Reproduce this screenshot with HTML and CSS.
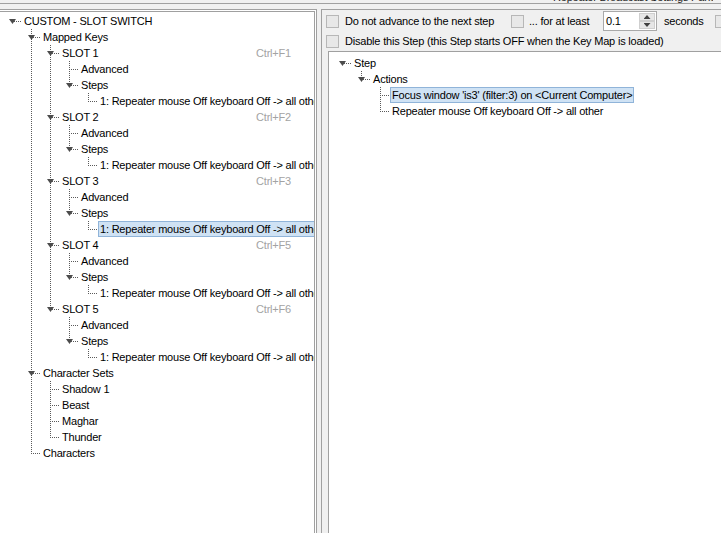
FILE: index.html
```html
<!DOCTYPE html>
<html>
<head>
<meta charset="utf-8">
<link rel="stylesheet" href="styles.css">
</head>
<body>
<div class="app">
  <div class="topstrip"><span class="cut">Repeater Broadcast Settings Panel</span></div>
  <div class="main">
    <div class="left">
      <div class="left-inner">
        <div class="tree ltree">
          <div class="row"><span class="c root"><b class="tri"></b></span><span class="lbl">CUSTOM - SLOT SWITCH</span></div>
          <div class="row"><span class="c"></span><span class="c tee"><b class="tri"></b></span><span class="lbl">Mapped Keys</span></div>

          <div class="row"><span class="c"></span><span class="c pipe"></span><span class="c tee"><b class="tri"></b></span><span class="lbl">SLOT 1</span><span class="key">Ctrl+F1</span></div>
          <div class="row"><span class="c"></span><span class="c pipe"></span><span class="c pipe"></span><span class="c tee"></span><span class="lbl">Advanced</span></div>
          <div class="row"><span class="c"></span><span class="c pipe"></span><span class="c pipe"></span><span class="c elb"><b class="tri"></b></span><span class="lbl">Steps</span></div>
          <div class="row"><span class="c"></span><span class="c pipe"></span><span class="c pipe"></span><span class="c"></span><span class="c elb"></span><span class="lbl">1: Repeater mouse Off keyboard Off -&gt; all other</span></div>

          <div class="row"><span class="c"></span><span class="c pipe"></span><span class="c tee"><b class="tri"></b></span><span class="lbl">SLOT 2</span><span class="key">Ctrl+F2</span></div>
          <div class="row"><span class="c"></span><span class="c pipe"></span><span class="c pipe"></span><span class="c tee"></span><span class="lbl">Advanced</span></div>
          <div class="row"><span class="c"></span><span class="c pipe"></span><span class="c pipe"></span><span class="c elb"><b class="tri"></b></span><span class="lbl">Steps</span></div>
          <div class="row"><span class="c"></span><span class="c pipe"></span><span class="c pipe"></span><span class="c"></span><span class="c elb"></span><span class="lbl">1: Repeater mouse Off keyboard Off -&gt; all other</span></div>

          <div class="row"><span class="c"></span><span class="c pipe"></span><span class="c tee"><b class="tri"></b></span><span class="lbl">SLOT 3</span><span class="key">Ctrl+F3</span></div>
          <div class="row"><span class="c"></span><span class="c pipe"></span><span class="c pipe"></span><span class="c tee"></span><span class="lbl">Advanced</span></div>
          <div class="row"><span class="c"></span><span class="c pipe"></span><span class="c pipe"></span><span class="c elb"><b class="tri"></b></span><span class="lbl">Steps</span></div>
          <div class="row"><span class="c"></span><span class="c pipe"></span><span class="c pipe"></span><span class="c"></span><span class="c elb"></span><span class="lbl sel">1: Repeater mouse Off keyboard Off -&gt; all other</span></div>

          <div class="row"><span class="c"></span><span class="c pipe"></span><span class="c tee"><b class="tri"></b></span><span class="lbl">SLOT 4</span><span class="key">Ctrl+F5</span></div>
          <div class="row"><span class="c"></span><span class="c pipe"></span><span class="c pipe"></span><span class="c tee"></span><span class="lbl">Advanced</span></div>
          <div class="row"><span class="c"></span><span class="c pipe"></span><span class="c pipe"></span><span class="c elb"><b class="tri"></b></span><span class="lbl">Steps</span></div>
          <div class="row"><span class="c"></span><span class="c pipe"></span><span class="c pipe"></span><span class="c"></span><span class="c elb"></span><span class="lbl">1: Repeater mouse Off keyboard Off -&gt; all other</span></div>

          <div class="row"><span class="c"></span><span class="c pipe"></span><span class="c elb"><b class="tri"></b></span><span class="lbl">SLOT 5</span><span class="key">Ctrl+F6</span></div>
          <div class="row"><span class="c"></span><span class="c pipe"></span><span class="c"></span><span class="c tee"></span><span class="lbl">Advanced</span></div>
          <div class="row"><span class="c"></span><span class="c pipe"></span><span class="c"></span><span class="c elb"><b class="tri"></b></span><span class="lbl">Steps</span></div>
          <div class="row"><span class="c"></span><span class="c pipe"></span><span class="c"></span><span class="c"></span><span class="c elb"></span><span class="lbl">1: Repeater mouse Off keyboard Off -&gt; all other</span></div>

          <div class="row"><span class="c"></span><span class="c tee"><b class="tri"></b></span><span class="lbl">Character Sets</span></div>
          <div class="row"><span class="c"></span><span class="c pipe"></span><span class="c tee"></span><span class="lbl">Shadow 1</span></div>
          <div class="row"><span class="c"></span><span class="c pipe"></span><span class="c tee"></span><span class="lbl">Beast</span></div>
          <div class="row"><span class="c"></span><span class="c pipe"></span><span class="c tee"></span><span class="lbl">Maghar</span></div>
          <div class="row"><span class="c"></span><span class="c pipe"></span><span class="c elb"></span><span class="lbl">Thunder</span></div>
          <div class="row"><span class="c"></span><span class="c elb"></span><span class="lbl">Characters</span></div>
        </div>
      </div>
    </div>
    <div class="split"></div>
    <div class="right">
      <div class="opts">
        <div class="orow orow1">
          <span class="cb"></span><span class="olbl w1">Do not advance to the next step</span>
          <span class="cb cb2"></span><span class="olbl w2">... for at least</span>
          <span class="num"><span class="val">0.1</span><span class="spin"><span class="sbtn"><b class="up"></b></span><span class="sbtn"><b class="down"></b></span></span></span>
          <span class="olbl secs">seconds</span>
          <span class="cb"></span>
        </div>
        <div class="orow orow2">
          <span class="cb"></span><span class="olbl">Disable this Step (this Step starts OFF when the Key Map is loaded)</span>
        </div>
      </div>
      <div class="rtree">
        <div class="tree">
          <div class="row"><span class="c root"><b class="tri"></b></span><span class="lbl">Step</span></div>
          <div class="row"><span class="c"></span><span class="c elb"><b class="tri"></b></span><span class="lbl">Actions</span></div>
          <div class="row"><span class="c"></span><span class="c"></span><span class="c tee"></span><span class="lbl sel">Focus window 'is3' (filter:3) on &lt;Current Computer&gt;</span></div>
          <div class="row"><span class="c"></span><span class="c"></span><span class="c elb"></span><span class="lbl">Repeater mouse Off keyboard Off -&gt; all other</span></div>
        </div>
      </div>
    </div>
  </div>
</div>
</body>
</html>
```
FILE: styles.css
```css
* { box-sizing: border-box; }

html, body {
  margin: 0;
  padding: 0;
}

body {
  width: 721px;
  height: 533px;
  overflow: hidden;
  background: #f0f0f0;
  font-family: "Liberation Sans", Arial, sans-serif;
  font-size: 11px;
  letter-spacing: -0.2px;
  color: #000;
}

.app {
  height: 533px;
  display: flex;
  flex-direction: column;
}

.topstrip {
  height: 4px;
  flex: none;
  border-bottom: 1px solid #a0a0a0;
  overflow: hidden;
  display: flex;
  justify-content: flex-end;
  padding-right: 8px;
}

.cut {
  line-height: 14px;
  margin-top: -10px;
  width: 160px;
  overflow: hidden;
  white-space: nowrap;
  color: #222;
}

.main {
  flex: 1;
  display: flex;
  margin-top: 5px;
  min-height: 0;
}

.left {
  width: 317px;
  flex: none;
  background: #fff;
  border-top: 1px solid #a0a0a0;
  border-right: 1px solid #a0a0a0;
  padding: 1px 1px 0 0;
}

.left-inner {
  height: 100%;
  border-top: 1px solid #a0a0a0;
  border-right: 1px solid #a0a0a0;
  overflow: hidden;
}

.split {
  width: 4px;
  flex: none;
}

.right {
  flex: 1;
  min-width: 0;
  display: flex;
  flex-direction: column;
  border-top: 1px solid #a0a0a0;
  border-left: 1px solid #a0a0a0;
}

/* ---------- tree ---------- */
.tree {
  --v: repeating-linear-gradient(to bottom, #5a5a5a 0 1px, transparent 1px 2px);
  --h: repeating-linear-gradient(to right, #5a5a5a 0 1px, transparent 1px 2px);
}

.ltree {
  padding: 1px 0 0 3px;
}

.row {
  display: flex;
  height: 16px;
  width: 288px;
  white-space: nowrap;
}

.c {
  width: 19px;
  flex: none;
  display: flex;
  align-items: center;
  justify-content: center;
  background-repeat: no-repeat;
}

.pipe {
  background-image: var(--v);
  background-size: 1px 16px;
  background-position: 9px 0;
}

.tee {
  background-image: var(--v), var(--h);
  background-size: 1px 16px, 10px 1px;
  background-position: 9px 0, 9px 8px;
}

.elb {
  background-image: var(--v), var(--h);
  background-size: 1px 8px, 10px 1px;
  background-position: 9px 0, 9px 8px;
}

.root {
  background-image: var(--h);
  background-size: 10px 1px;
  background-position: 9px 8px;
}

.tri {
  width: 7px;
  height: 5px;
  margin-top: 1px;
  background: #4c4c4c;
  clip-path: polygon(0 0, 100% 0, 50% 100%);
}

.lbl {
  flex: none;
  border: 1px solid transparent;
  padding: 1px 1px 0;
  line-height: 13px;
}

.lbl.sel {
  background: #cfe2f4;
  border-color: #90b4d9;
}

.key {
  margin-left: auto;
  color: #a3a3a3;
  padding-top: 1px;
  line-height: 15px;
}

/* ---------- options ---------- */
.opts {
  height: 41px;
  flex: none;
  padding-left: 4px;
}

.orow {
  display: flex;
  align-items: center;
  white-space: nowrap;
}

.orow1 { height: 22px; }
.orow2 { height: 18px; }

.cb {
  width: 13px;
  height: 13px;
  flex: none;
  border: 1px solid #b7b7b7;
  background: #e8e8e8;
  margin-right: 6px;
}

.cb2 { margin-right: 5px; }

.olbl { flex: none; }
.w1 { width: 166px; }
.w2 { width: 74px; }

.num {
  width: 54px;
  height: 20px;
  flex: none;
  display: flex;
  background: #fff;
  border: 1px solid #a9a9a9;
}

.val {
  flex: 1;
  padding-left: 2px;
  line-height: 18px;
}

.spin {
  width: 17px;
  display: flex;
  flex-direction: column;
  padding: 1px 1px 1px 0;
}

.sbtn {
  flex: 1;
  display: flex;
  align-items: center;
  justify-content: center;
  background: #e6e6e6;
  border: 1px solid #cfcfcf;
}

.up, .down {
  width: 7px;
  height: 4px;
  background: #404040;
}

.up { clip-path: polygon(50% 0, 100% 100%, 0 100%); }
.down { clip-path: polygon(0 0, 100% 0, 50% 100%); }

.secs {
  width: 51px;
  margin-left: 7px;
}

/* ---------- right tree ---------- */
.rtree {
  flex: 1;
  margin-left: 6px;
  background: #fff;
  border-top: 1px solid #a0a0a0;
  border-left: 1px solid #a0a0a0;
  padding: 3px 0 0 4px;
  overflow: hidden;
}
```
